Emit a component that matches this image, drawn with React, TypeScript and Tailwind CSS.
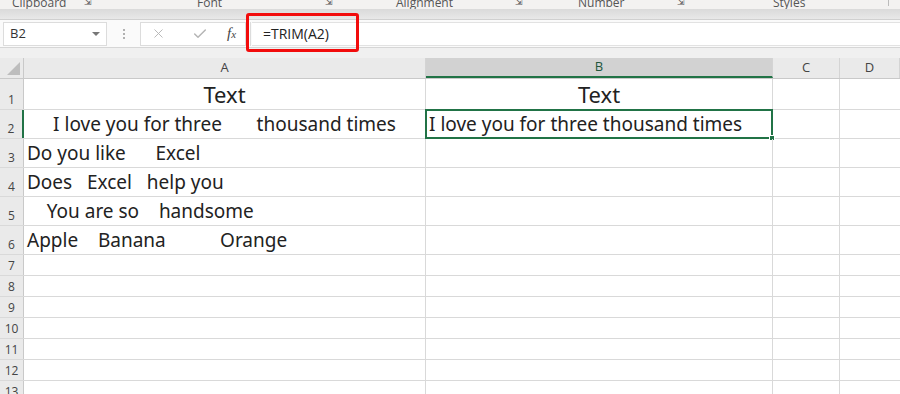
import { X, Check } from "lucide-react";

const COLS = [
  { key: "A", w: "w-[402px]" },
  { key: "B", w: "w-[347px]" },
  { key: "C", w: "w-[67px]" },
  { key: "D", w: "flex-1" },
];

const ROWS: { n: number; h: string; a?: string; b?: string; center?: boolean; big?: boolean }[] = [
  { n: 1, h: "h-[31px]", a: "Text", b: "Text", center: true, big: true },
  { n: 2, h: "h-[29px]", a: "I love you for three       thousand times", b: "I love you for three thousand times", center: true },
  { n: 3, h: "h-[29px]", a: "Do you like      Excel" },
  { n: 4, h: "h-[29px]", a: "Does   Excel   help you" },
  { n: 5, h: "h-[29px]", a: "    You are so    handsome" },
  { n: 6, h: "h-[29px]", a: "Apple    Banana           Orange" },
  { n: 7, h: "h-[21px]" },
  { n: 8, h: "h-[21px]" },
  { n: 9, h: "h-[21px]" },
  { n: 10, h: "h-[21px]" },
  { n: 11, h: "h-[21px]" },
  { n: 12, h: "h-[21px]" },
  { n: 13, h: "h-[21px]" },
];

export default function App() {
  return (
    <div className="w-[900px] h-[394px] overflow-hidden bg-white font-['Open_Sans',sans-serif] text-[#222]">
      {/* ribbon group labels (cut off at top) */}
      <div className="h-[9px] bg-[#f3f2f1] relative overflow-hidden text-[12px] text-[#555] leading-none">
        <span className="absolute left-[12px] -top-[3px]">Clipboard</span>
        <span className="absolute left-[84px] -top-[3px] text-[9px]">⇲</span>
        <span className="absolute left-[197px] -top-[3px]">Font</span>
        <span className="absolute left-[325px] -top-[3px] text-[9px]">⇲</span>
        <span className="absolute left-[396px] -top-[3px]">Alignment</span>
        <span className="absolute left-[515px] -top-[3px] text-[9px]">⇲</span>
        <span className="absolute left-[578px] -top-[3px]">Number</span>
        <span className="absolute left-[677px] -top-[3px] text-[9px]">⇲</span>
        <span className="absolute left-[773px] -top-[3px]">Styles</span>
        <span className="absolute left-[888px] top-0 w-px h-[6px] bg-[#bbb]" />
      </div>
      <div className="h-[11px] bg-gradient-to-b from-[#dadada] to-[#e8e8e8] border-b border-[#d0d0d0]" />

      {/* formula bar */}
      <div className="h-[27px] bg-[#fafafa] flex items-center relative">
        <div className="ml-[3px] w-[104px] h-[24px] bg-white border border-[#dcdcdc] flex items-center justify-between pl-[6px] pr-[6px] text-[13px] text-[#333]">
          <span>B2</span>
          <span className="w-0 h-0 border-l-[4px] border-r-[4px] border-t-[4px] border-l-transparent border-r-transparent border-t-[#777]" />
        </div>
        <div className="w-[33px] flex flex-col items-center gap-[2px]">
          <span className="w-[2px] h-[2px] bg-[#999] rounded-full" />
          <span className="w-[2px] h-[2px] bg-[#999] rounded-full" />
          <span className="w-[2px] h-[2px] bg-[#999] rounded-full" />
        </div>
        <div className="w-[106px] h-[24px] bg-white border border-[#dcdcdc] flex items-center pl-[10px]">
          <X size={15} strokeWidth={1.5} className="text-[#b5b5b5]" />
          <Check size={16} strokeWidth={2.2} className="text-[#b5b5b5] ml-[26px]" />
          <span className="font-['Liberation_Serif',serif] italic text-[15px] text-[#444] ml-[19px]">f<span className="text-[11px]">x</span></span>
        </div>
        <div className="ml-[4px] w-[2px] h-[24px] border-l border-[#dcdcdc]" />
        <div className="flex-1 h-[24px] bg-white border-y border-[#e2e2e2] flex items-center pl-[11px] text-[14px] text-[#222]">
          =TRIM(A2)
        </div>
        <div className="absolute left-[246px] top-[-7px] w-[113px] h-[39px] border-[3px] border-[#f20c0c] rounded-[3px]" />
      </div>
      <div className="h-[11px] bg-[#f0f0f0] border-t border-[#d6d6d6]" />

      {/* column headers */}
      <div className="flex h-[21px] bg-[#eaeaea] border-b border-[#c9c9c9] text-[13px] text-[#444]">
        <div className="w-[24px] border-r border-[#c9c9c9] flex items-end justify-end p-[3px]">
          <span className="w-0 h-0 [border-bottom:13px_solid_#bdbdbd] [border-left:13px_solid_transparent]" />
        </div>
        {COLS.map(c => (
          <div
            key={c.key}
            className={`${c.w} flex items-center justify-center border-r border-[#d4d4d4] ${c.key === "B" ? "bg-[#d2d2d2] border-b-2 border-b-[#217346] text-[#21563c]" : ""}`}
          >
            {c.key}
          </div>
        ))}
      </div>

      {/* rows */}
      {ROWS.map(r => (
        <div key={r.n} className={`flex ${r.h} border-b border-[#d9d9d9]`}>
          <div className={`w-[24px] shrink-0 bg-[#eaeaea] border-r flex items-end justify-center pb-[1px] text-[12px] leading-[16px] text-[#444] ${r.n === 2 ? "bg-[#d6d6d6] border-r-2 border-r-[#217346]" : "border-[#c9c9c9]"}`}>
            {r.n}
          </div>
          <div className={`w-[402px] shrink-0 border-r border-[#d9d9d9] flex items-end whitespace-pre font-['Noto_Sans',sans-serif] overflow-hidden ${r.center ? "justify-center" : "pl-[3px]"} ${r.big ? "text-[22px] leading-[30px]" : "text-[19px] leading-[27px]"}`}>
            {r.a}
          </div>
          <div className={`w-[347px] shrink-0 border-r border-[#d9d9d9] flex items-end whitespace-pre font-['Noto_Sans',sans-serif] relative ${r.big ? "justify-center text-[22px] leading-[30px]" : "pl-[3px] text-[19px] leading-[27px]"}`}>
            {r.b}
            {r.n === 2 && (
              <div className="absolute -left-[1px] -top-[1px] -right-[1px] -bottom-[1px] border-2 border-[#217346]">
                <span className="absolute -right-[4px] -bottom-[4px] w-[6px] h-[6px] bg-[#217346] border border-white" />
              </div>
            )}
          </div>
          <div className="w-[67px] shrink-0 border-r border-[#d9d9d9]" />
          <div className="flex-1" />
        </div>
      ))}
    </div>
  );
}
